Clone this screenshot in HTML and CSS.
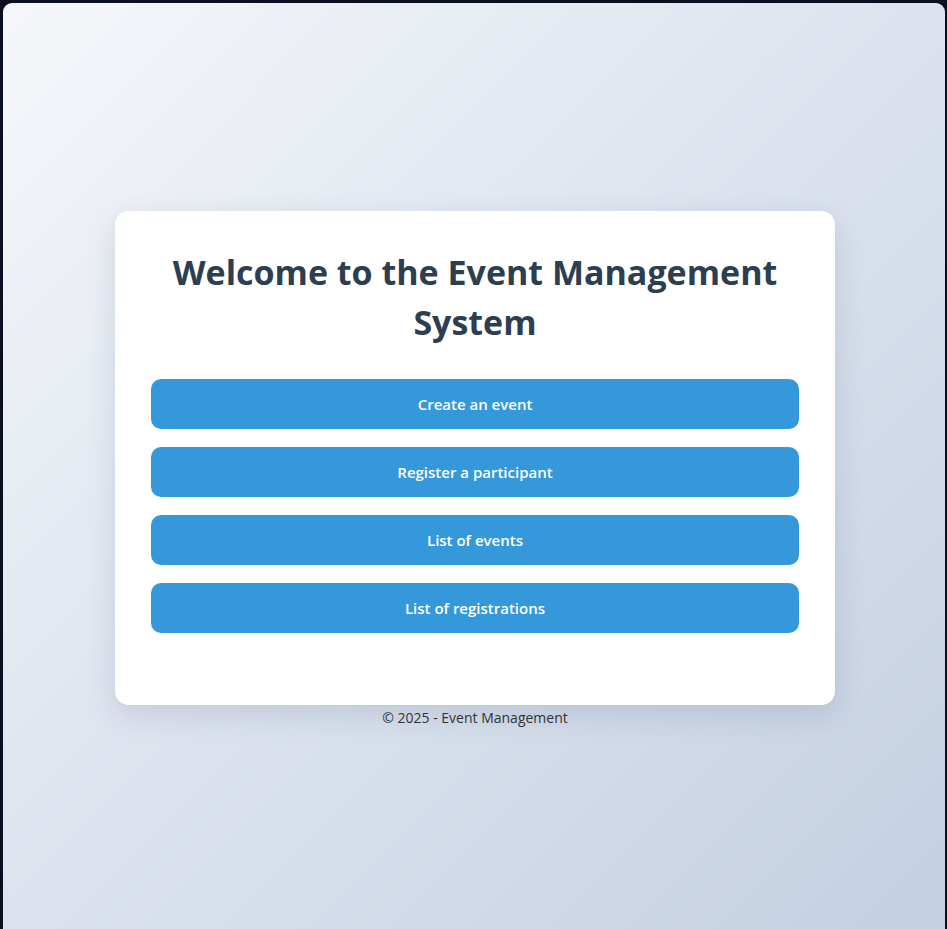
FILE: index.html
```html
<!DOCTYPE html>
<html lang="en">
<head>
<meta charset="utf-8">
<title>Event Management</title>
<link rel="stylesheet" href="styles.css">
</head>
<body>
<main class="page">
  <section class="card">
    <h1 class="title">Welcome to the Event Management System</h1>
    <nav class="actions">
      <a class="btn" href="#">Create an event</a>
      <a class="btn" href="#">Register a participant</a>
      <a class="btn" href="#">List of events</a>
      <a class="btn" href="#">List of registrations</a>
    </nav>
  </section>
  <footer class="footer">© 2025 - Event Management</footer>
</main>
</body>
</html>
```

FILE: styles.css
```css
html {
  background: #0b1020;
  height: 100%;
}
body {
  margin: 3px 2px 0 3px;
  min-height: 926px;
  border-radius: 9px 9px 0 0;
  background: linear-gradient(135deg, #f5f7fa 0%, #c3cfe2 100%);
  font-family: "Open Sans", "Noto Sans", sans-serif;
  color: #333;
}
.page {
  display: flex;
  flex-direction: column;
  align-items: center;
  padding-top: 208px;
  padding-left: 2px;
}
.card {
  box-sizing: border-box;
  width: 720px;
  background: #fff;
  border-radius: 14px;
  padding: 36px 36px 72px;
  box-shadow: 0 10px 30px rgba(40, 60, 100, 0.15);
}
.title {
  margin: 0 0 32px;
  text-align: center;
  font-size: 34px;
  line-height: 50px;
  font-weight: 700;
  color: #2c3e50;
}
.actions {
  display: flex;
  flex-direction: column;
  gap: 18px;
}
.btn {
  display: flex;
  align-items: center;
  justify-content: center;
  height: 50px;
  border-radius: 10px;
  background: #3498db;
  color: #fff;
  text-decoration: none;
  font-size: 15px;
  font-weight: 600;
}
.footer {
  margin-top: 4px;
  font-size: 14px;
  line-height: 18px;
  color: #333;
}
```
